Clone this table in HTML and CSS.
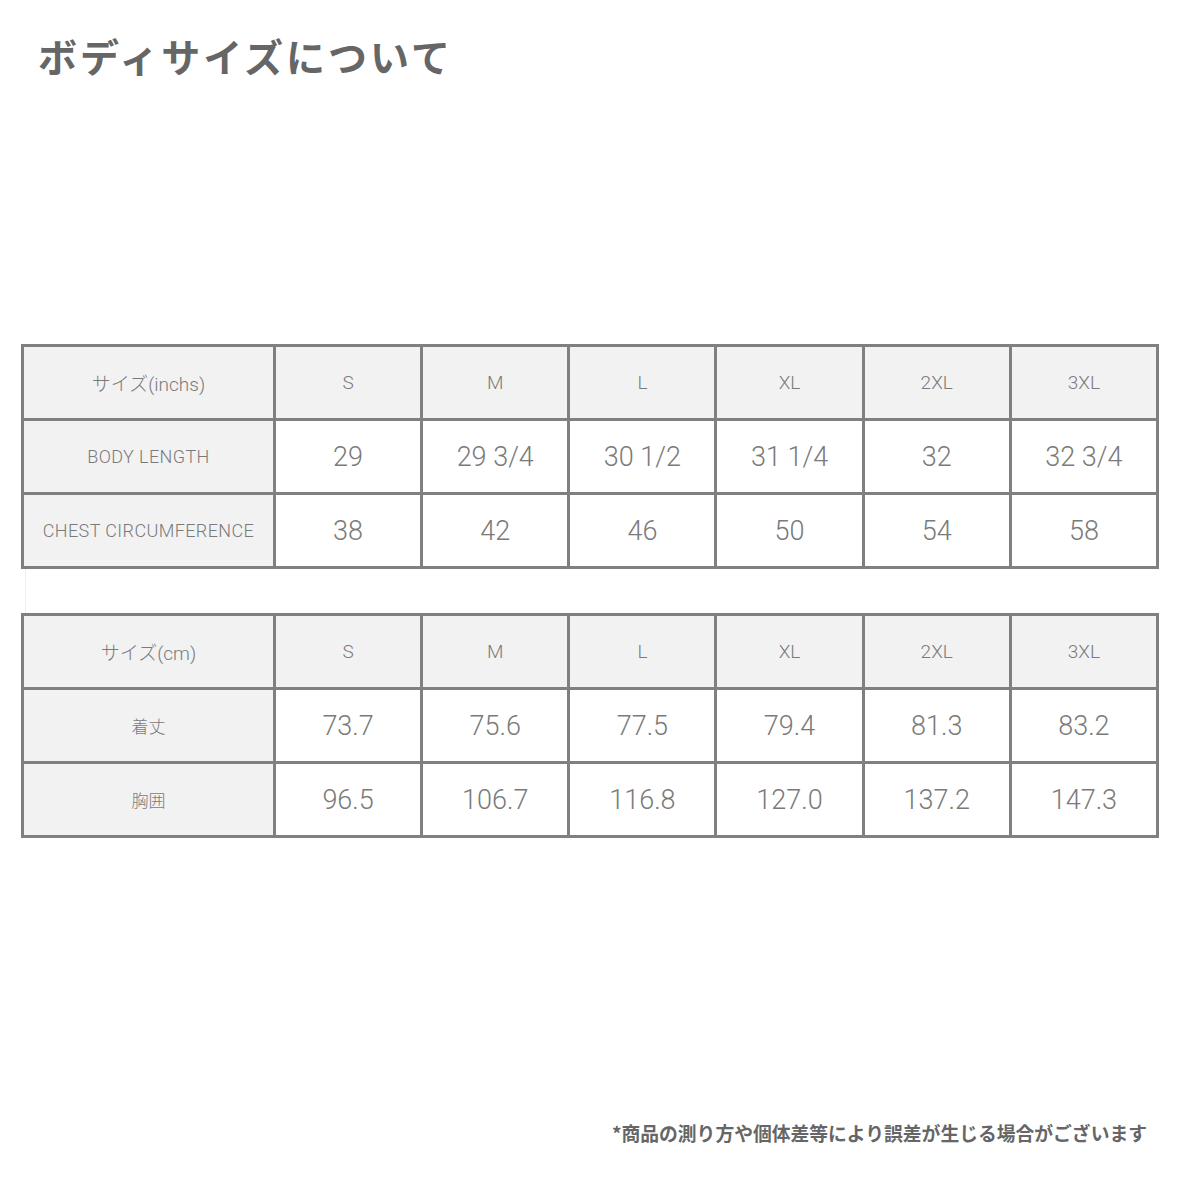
FILE: index.html
```html
<!DOCTYPE html>
<html lang="ja">
<head>
<meta charset="utf-8">
<link rel="stylesheet" href="styles.css">
</head>
<body>
<div class="page">
  <h1 class="title">ボディサイズについて</h1>

  <table class="size">
    <colgroup><col class="c-label"><col><col><col><col><col><col></colgroup>
    <tr class="head">
      <td class="label">サイズ(inchs)</td><td>S</td><td>M</td><td>L</td><td>XL</td><td>2XL</td><td>3XL</td>
    </tr>
    <tr>
      <td class="label latin">BODY LENGTH</td><td>29</td><td>29 3/4</td><td>30 1/2</td><td>31 1/4</td><td>32</td><td>32 3/4</td>
    </tr>
    <tr>
      <td class="label latin">CHEST CIRCUMFERENCE</td><td>38</td><td>42</td><td>46</td><td>50</td><td>54</td><td>58</td>
    </tr>
  </table>

  <div class="spacer"></div>

  <table class="size">
    <colgroup><col class="c-label"><col><col><col><col><col><col></colgroup>
    <tr class="head">
      <td class="label">サイズ(cm)</td><td>S</td><td>M</td><td>L</td><td>XL</td><td>2XL</td><td>3XL</td>
    </tr>
    <tr>
      <td class="label">着丈</td><td>73.7</td><td>75.6</td><td>77.5</td><td>79.4</td><td>81.3</td><td>83.2</td>
    </tr>
    <tr>
      <td class="label">胸囲</td><td>96.5</td><td>106.7</td><td>116.8</td><td>127.0</td><td>137.2</td><td>147.3</td>
    </tr>
  </table>

  <p class="note">*商品の測り方や個体差等により誤差が生じる場合がございます</p>
</div>
</body>
</html>
```

FILE: styles.css
```css
html, body {
  margin: 0;
  padding: 0;
  background: #ffffff;
}

.page {
  width: 1181px;
  height: 1181px;
  box-sizing: border-box;
  padding: 0 22px 0 21px;
  font-family: "Noto Sans CJK JP", "Noto Sans", sans-serif;
  color: #777777;
}

.title {
  margin: 0;
  padding: 29px 0 0 17px;
  font-size: 39px;
  line-height: 52px;
  font-weight: 700;
  color: #666666;
  letter-spacing: 3px;
}

.size {
  width: 1138px;
  table-layout: fixed;
  border-collapse: collapse;
  border: 3px solid #808080;
}

.size:first-of-type {
  margin-top: 263px;
}

.c-label {
  width: 252px;
}

.size td {
  border: 3px solid #808080;
  height: 71px;
  padding: 0;
  text-align: center;
  vertical-align: middle;
  font-family: Roboto, "Noto Sans CJK JP", sans-serif;
  font-weight: 300;
  font-size: 27px;
  color: #7a7a7a;
  background: #ffffff;
}

.size .head td {
  background: #f2f2f2;
  font-size: 19px;
}

.size td.label {
  background: #f2f2f2;
  font-size: 17px;
}

.size .head td.label {
  font-size: 19px;
}

.size td.latin {
  font-size: 18px;
  letter-spacing: 0.4px;
}

.spacer {
  height: 44px;
  margin-left: 4px;
  border-left: 1px solid #eeeeee;
}

.note {
  margin: 283px 12px 0 0;
  text-align: right;
  font-size: 18.8px;
  line-height: 24px;
  font-weight: 700;
  color: #666666;
}
```
